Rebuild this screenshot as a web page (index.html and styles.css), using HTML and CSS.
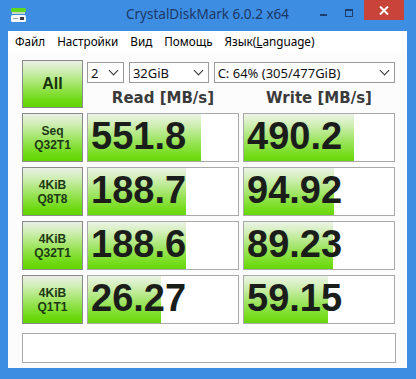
FILE: index.html
```html
<!DOCTYPE html>
<html lang="ru">
<head>
    <meta charset="UTF-8">
    <title>CrystalDiskMark 6.0.2 x64</title>
    <link rel="stylesheet" href="styles.css">
</head>
<body>
    <div class="window">
        <div class="titlebar">
            <div class="app-icon">
                <svg width="18" height="18" viewBox="0 0 18 18">
                    <rect x="1" y="2" width="15" height="4" rx="1.5" fill="#5fd91e"/>
                    <rect x="2" y="6" width="13" height="2" fill="#c9d6c0"/>
                    <rect x="1" y="9" width="15" height="7" rx="1.5" fill="#f4f6f8"/>
                    <rect x="10" y="11" width="4" height="3" fill="#3a3f48"/>
                    <rect x="3" y="12" width="5" height="1" fill="#9aa3ad"/>
                </svg>
            </div>
            <div class="title">CrystalDiskMark 6.0.2 x64</div>
            <div class="controls">
                <span class="ctl-min"></span>
                <span class="ctl-max"></span>
                <span class="ctl-close">
                    <svg width="10" height="9" viewBox="0 0 10 9">
                        <path d="M1 0.5 L9 8.5 M9 0.5 L1 8.5" stroke="#fff" stroke-width="2"/>
                    </svg>
                </span>
            </div>
        </div>

        <div class="client">
            <div class="menubar">
                <span class="menu-item">Файл</span>
                <span class="menu-item">Настройки</span>
                <span class="menu-item">Вид</span>
                <span class="menu-item">Помощь</span>
                <span class="menu-item">Язык(<u>L</u>anguage)</span>
            </div>

            <div class="panel">
                <div class="bench">
                    <div class="btn btn-all">All</div>
                    <div class="top-right">
                        <div class="selects">
                            <div class="select sel-count"><span>2</span><i class="chev"></i></div>
                            <div class="select sel-size"><span>32GiB</span><i class="chev"></i></div>
                            <div class="select sel-drive"><span>C: 64% (305/477GiB)</span><i class="chev"></i></div>
                        </div>
                        <div class="headers">
                            <div class="head">Read [MB/s]</div>
                            <div class="head">Write [MB/s]</div>
                        </div>
                    </div>

                    <div class="btn">Seq<br>Q32T1</div>
                    <div class="cell" style="--w: 113px">551.8</div>
                    <div class="cell" style="--w: 110px">490.2</div>

                    <div class="btn">4KiB<br>Q8T8</div>
                    <div class="cell" style="--w: 98px">188.7</div>
                    <div class="cell" style="--w: 90px">94.92</div>

                    <div class="btn">4KiB<br>Q32T1</div>
                    <div class="cell" style="--w: 98px">188.6</div>
                    <div class="cell" style="--w: 89px">89.23</div>

                    <div class="btn">4KiB<br>Q1T1</div>
                    <div class="cell" style="--w: 73px">26.27</div>
                    <div class="cell" style="--w: 84px">59.15</div>
                </div>

                <div class="status"></div>
            </div>
        </div>
    </div>
</body>
</html>
```

FILE: styles.css
```css
body { margin: 0; font-family: "Noto Sans", "Liberation Sans", sans-serif; }
.window { width: 416px; height: 379px; box-sizing: border-box; background: #3d8de3; padding: 0 9px 11px 8px; display: flex; flex-direction: column; }

.titlebar { height: 31px; display: grid; grid-template-columns: 1fr auto 1fr; align-items: start; }
.app-icon { padding: 6px 0 0 2px; }
.title { font-size: 13.5px; color: #1b3866; line-height: 31px; margin-top: -1px; }
.controls { display: flex; justify-content: flex-end; align-items: flex-start; }
.ctl-min { width: 7px; height: 2px; background: #1d3d6c; margin: 14px 18px 0 0; }
.ctl-max { width: 6px; height: 5px; border: 1px solid #1d3d6c; border-top-width: 2px; margin: 9px 11px 0 0; }
.ctl-close { width: 40px; height: 20px; background: #c8443b; display: flex; align-items: center; justify-content: center; margin-right: 3px; }

.client { flex: 1; background: #fcfcfc; display: flex; flex-direction: column; }
.menubar { height: 21px; background: #fff; display: flex; padding-left: 1px; }
.menu-item { font-size: 11.7px; line-height: 21px; padding: 0 6px; color: #000; }
.menu-item u { text-decoration-thickness: 1px; }

.panel { padding: 8px 0 0 14px; }
.bench { display: grid; grid-template-columns: 61px 152px 152px; grid-template-rows: 48px repeat(4, 49px); gap: 5px 4px; }

.btn { box-sizing: border-box; border: 1px solid #8a8a8a; background: linear-gradient(to bottom, #eaefe6 0%, #cfeeb3 22%, #97e354 58%, #6fda14 85%, #62d400 100%); display: flex; align-items: center; justify-content: center; text-align: center; font-family: "Liberation Sans", Arial, sans-serif; font-weight: bold; font-size: 12px; line-height: 14px; color: #1c3a12; }
.btn-all { font-size: 16px; color: #17300d; }

.top-right { grid-column: 2 / 4; padding-top: 2px; }
.selects { display: flex; gap: 5px; height: 21px; }
.select { box-sizing: border-box; height: 21px; border: 1px solid #9a9a9a; background: #fff; display: flex; align-items: center; justify-content: space-between; padding: 0 5px 0 3px; font-size: 13px; color: #111; }
.sel-count { width: 37px; }
.sel-size { width: 80px; }
.sel-drive { width: 182px; }
.chev { width: 6px; height: 6px; border-right: 1.5px solid #333; border-bottom: 1.5px solid #333; transform: rotate(45deg); margin-top: -4px; margin-right: 1px; }
.headers { display: grid; grid-template-columns: 152px 152px; gap: 4px; }
.head { text-align: center; font-family: "DejaVu Sans", Verdana, sans-serif; font-weight: bold; font-size: 15px; line-height: 24px; padding-top: 3px; color: #3a3a3a; }

.cell { box-sizing: border-box; border: 1px solid #a9a9a9; background-color: #fff; background-image: linear-gradient(to bottom, #ecf3e6 0%, #cdeeb0 25%, #98e458 60%, #74dc1a 88%, #68d60a 100%); background-repeat: no-repeat; background-size: var(--w) 100%; font-family: "Liberation Sans", Arial, sans-serif; font-weight: bold; font-size: 38px; line-height: 44px; padding-left: 3px; color: #1b1d1a; }

.status { box-sizing: border-box; width: 374px; height: 30px; margin-top: 9px; border: 1px solid #a9a9a9; background: #fff; }
```
